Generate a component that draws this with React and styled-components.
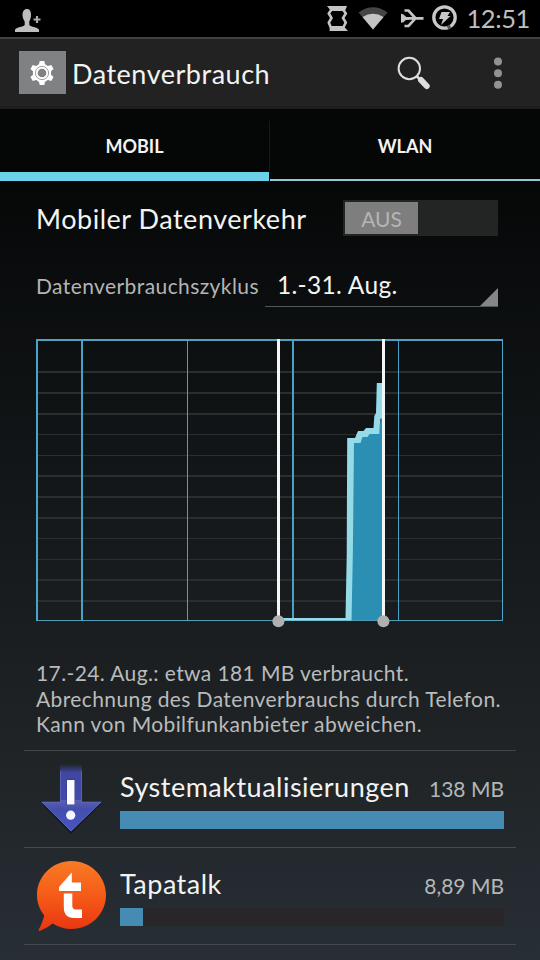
import React from "react";
import styled, { createGlobalStyle } from "styled-components";

const GlobalStyle = createGlobalStyle`
  * {
    box-sizing: border-box;
  }

  body {
    margin: 0;
    background: #000;
    font-family: Lato, "Open Sans", sans-serif;
  }
`;

const Screen = styled.div`
  width: 540px;
  height: 960px;
  overflow: hidden;
  display: flex;
  flex-direction: column;
  background: linear-gradient(#000 0, #050707 170px, #121517 450px, #1f2325 740px, #272e35 960px);
  color: #f3f3f3;
  white-space: nowrap;
`;

const StatusBar = styled.div`
  height: 37px;
  flex: none;
  display: flex;
  align-items: center;
  justify-content: space-between;
  padding: 0 10px 0 14px;
  background: #000;
`;

const StatusIcons = styled.div`
  display: flex;
  align-items: center;
`;

const Clock = styled.span`
  margin-left: 8px;
  font-size: 25.5px;
  line-height: 37px;
  letter-spacing: -0.4px;
  color: #bebebe;
`;

const ActionBar = styled.header`
  height: 72px;
  flex: none;
  display: flex;
  align-items: center;
  padding: 0 38px 0 19px;
  background: #222;
  border-top: 2px solid #414141;
  border-bottom: 3px solid #1d1d1d;
`;

const AppBadge = styled.div`
  width: 47px;
  height: 43px;
  display: flex;
  align-items: center;
  justify-content: center;
  padding-right: 1px;
  background: #7f8182;
`;

const Title = styled.h1`
  flex: 1;
  margin: 0 0 0 6px;
  padding-top: 2px;
  font-size: 27px;
  font-weight: 400;
  line-height: 36px;
  letter-spacing: 0.52px;
`;

const SearchIcon = styled.svg`
  margin: 1px 62px 0 0;
`;

const Tabs = styled.nav`
  height: 72px;
  flex: none;
  display: flex;
  background: #050706;
`;

const Tab = styled.div`
  width: ${({ $active }) => ($active ? "269px" : "270px")};
  display: flex;
  align-items: center;
  justify-content: center;
  padding-top: ${({ $active }) => ($active ? "11px" : "4px")};
  border-bottom: ${({ $active }) => ($active ? "9px solid #6dd0e9" : "2px solid #91c7d2")};
  font-size: 18px;
  font-weight: 700;
`;

const TabDivider = styled.div`
  width: 1px;
  height: 50px;
  margin-top: 12px;
  background: #191b1b;
`;

const Settings = styled.main`
  padding: 19px 36px 0;
`;

const SettingRow = styled.div`
  width: 462px;
  display: flex;
  align-items: center;
  justify-content: space-between;
`;

const SettingLabel = styled.span`
  padding-top: 2px;
  font-size: 27px;
  line-height: 34px;
  letter-spacing: 0.52px;
`;

const Switch = styled.div`
  width: 155px;
  height: 36px;
  padding: 2px;
  background: #232424;
`;

const SwitchThumb = styled.div`
  width: 73px;
  height: 32px;
  padding-top: 1px;
  background: #7e7e7e;
  color: #b5b5b5;
  font-size: 21px;
  line-height: 32px;
  text-align: center;
`;

const CycleRow = styled(SettingRow)`
  height: 42px;
  margin-top: 29px;
`;

const CycleLabel = styled.span`
  padding-bottom: 2px;
  font-size: 21px;
  letter-spacing: 0.41px;
  color: #b4b5b5;
`;

const Spinner = styled.div`
  width: 233px;
  height: 42px;
  display: flex;
  align-items: flex-end;
  justify-content: space-between;
  padding-left: 12px;
  border-bottom: 1px solid #555758;
  font-size: 24.5px;
  line-height: 42px;
  letter-spacing: 0.3px;
`;

const SpinnerArrow = styled.div`
  width: 18px;
  height: 18px;
  background: #858686;
  clip-path: polygon(100% 0, 100% 100%, 0 100%);
`;

const Chart = styled.svg`
  display: block;
  margin: 27px 0 0 -6px;
`;

const Summary = styled.p`
  margin: 26px 0 0;
  font-size: 21px;
  line-height: 25.5px;
  letter-spacing: 0.39px;
  color: #b9bbbc;
`;

const AppList = styled.ul`
  margin: 13px 24px 0;
  padding: 0;
  list-style: none;
  border-top: 1px solid #424547;
`;

const AppRow = styled.li`
  height: 97px;
  display: flex;
  padding: 0 12px;
  border-bottom: 1px solid #464a4d;
`;

const AppIcon = styled.svg`
  flex: none;
  margin-top: 8px;
`;

const AppInfo = styled.div`
  flex: 1;
  margin-left: 12px;
  padding-top: 18px;
`;

const AppHeading = styled.div`
  height: 36px;
  display: flex;
  align-items: baseline;
  justify-content: space-between;
  line-height: 36px;
`;

const AppName = styled.span`
  font-size: 27px;
  letter-spacing: 0.49px;
`;

const AppUsage = styled.span`
  font-size: 21px;
  color: #b4b7b9;
`;

const UsageTrack = styled.div`
  height: 18px;
  margin-top: 6px;
  background: #282629;
`;

const UsageBar = styled.div`
  height: 100%;
  background: #458bb4;
`;

// [y, thickness]
const gridLines = [
  [371, 2], [392, 2], [413, 2], [434, 1], [455, 1], [475, 2],
  [496, 2], [517, 2], [538, 1], [559, 1], [579, 2], [600, 2],
];

// [x, thickness]
const weekLines = [[81, 2], [187, 1], [292, 2], [398, 1]];

const sweeps = [277, 382];

const UsageChart = () => (
  <Chart width="480" height="300" viewBox="30 334 480 300">
    {gridLines.map(([y, h]) => (
      <rect key={y} x="38" y={y} width="464" height={h} fill="#2b2e2f" />
    ))}
    <path
      d="M351 620V440H361L363 434 369 433 371 430H379L381 418H382.5V620Z"
      fill="#2b8fb4"
    />
    <rect x="36" y="339" width="2" height="282" fill="#4aa3cb" />
    <rect x="36" y="339" width="467" height="2" fill="#549fbe" />
    <rect x="502" y="339" width="1" height="282" fill="#4ba6c9" />
    <rect x="36" y="620" width="467" height="1" fill="#4f9fb9" />
    {weekLines.map(([x, w]) => (
      <rect key={x} x={x} y="339" width={w} height="282" fill="#47a1c9" />
    ))}
    <path
      d="M280 618H345.5L346.7 556 347.2 438H355L358 431H363.5L366 428H373.5L374.3 416 376 413 376.8 383H382V418L380.3 419 379.3 434H369.5L367.5 437H362.5L360.5 443H354L352.8 556 351.5 620.5H280Z"
      fill="#94dbe7"
    />
    {sweeps.map((x) => (
      <g key={x}>
        <rect x={x} y="339" width="3" height="280" fill="#f4f6f6" />
        <circle cx={x + 1.4} cy="621.3" r="6" fill="#b0b0b0" />
      </g>
    ))}
  </Chart>
);

const UpdateIcon = () => (
  <AppIcon width="72" height="78" viewBox="36 759 72 78">
    <defs>
      <linearGradient id="shaft" x1="0" y1="0" x2="0" y2="1">
        <stop offset="0" stopColor="#3c449c" stopOpacity="0" />
        <stop offset="0.2" stopColor="#3f479f" />
        <stop offset="1" stopColor="#414bad" />
      </linearGradient>
      <linearGradient id="head" x1="0" y1="0" x2="0" y2="1">
        <stop offset="0" stopColor="#5b60b2" />
        <stop offset="0.3" stopColor="#444ead" />
        <stop offset="1" stopColor="#4656c6" />
      </linearGradient>
    </defs>
    <path d="M42 804L71 834 101 804Z" fill="#111417" opacity="0.8" />
    <path d="M60 764H82V806H60Z" fill="url(#shaft)" />
    <path d="M41.5 802H60.5V800H81.5V802H101.5L71 831.5Z" fill="url(#head)" />
    <path d="M60.5 771V802H42L71 831 101 802H81.5V771" fill="none" stroke="#7178c4" strokeWidth="0.8" opacity="0.65" />
    <rect x="66.5" y="779" width="8.5" height="26" fill="#353a93" />
    <rect x="67" y="780" width="7.5" height="24.5" fill="#fbfbff" />
    <circle cx="70.7" cy="815.2" r="4.6" fill="#f6f6ff" />
  </AppIcon>
);

const TapatalkIcon = () => (
  <AppIcon width="72" height="78" viewBox="36 856 72 78">
    <defs>
      <linearGradient id="bubble" x1="0" y1="0" x2="0" y2="1">
        <stop offset="0" stopColor="#f97a24" />
        <stop offset="0.5" stopColor="#f55b18" />
        <stop offset="1" stopColor="#e93512" />
      </linearGradient>
    </defs>
    <path
      d="M71.5 861C90.5 861 106 876 106 895S90.5 929 71.5 929C64.5 929 58 927 52.5 923.5C49 926.5 44 929.5 39.5 931C38.5 931 38.5 930 39 929C41.5 924.5 43 920 44.3 915.5C39.7 909.5 37 903 37 895C37 876 52.5 861 71.5 861Z"
      fill="url(#bubble)"
    />
    <path d="M71.8 872.5V882.5H81V891H59V887Z" fill="#fff" />
    <path d="M63.8 893.5H72.3V905.5Q72.3 909.5 76 909.5H82V918H74Q63.8 918 63.8 907Z" fill="#fff" />
  </AppIcon>
);

const apps = [
  { name: "Systemaktualisierungen", usage: "138 MB", share: 100, Icon: UpdateIcon },
  { name: "Tapatalk", usage: "8,89 MB", share: 6, Icon: TapatalkIcon },
];

const ContactIcon = () => (
  <svg width="27" height="26" viewBox="14 6 27 26">
    <path
      d="M27 9C30 9 31 11.5 31 15C31 18 30 20 29.3 21.5V25C31 27 37 27 39 29.5V32H15V29.5C17 27 23 27 24.7 25V21.5C23.5 19.5 22.5 17.5 22.5 15C22.5 11.5 24 9 27 9Z"
      fill="#bebebe"
    />
    <path d="M37 16V23M33.5 19.5H40.5" stroke="#aaa" strokeWidth="2.2" />
  </svg>
);

const StatusGlyphs = () => (
  <svg width="132" height="30" viewBox="326 4 132 30">
    {/* rotation */}
    <path d="M327 6H347L345 11H331Z" fill="#c4c4c4" />
    <path d="M330 26H343.5L348 31H329.5Z" fill="#c4c4c4" />
    <path
      d="M331.5 9.5L328.8 13.5L331.5 18L328.8 22.5L331 28M343 9.5L345.8 13.5L343 18L345.8 22.5L343 28"
      fill="none"
      stroke="#c4c4c4"
      strokeWidth="2.6"
    />
    {/* wifi */}
    <path d="M358.5 12.5Q373 2 387.5 12.5L373 29.5Z" fill="#454545" />
    <path d="M362.5 17Q373 10.5 383.5 17L373 29.5Z" fill="#c4c4c4" />
    {/* airplane */}
    <path
      d="M404.5 10.5H408.5L415.5 18.3L408.5 26H404.5M402 15L405.5 18.3L402 21.7M405 18.3H423.5"
      fill="none"
      stroke="#c4c4c4"
      strokeWidth="2.7"
    />
    <path d="M401 13.5L406 17H409V19.8H406L401 23Z" fill="#c4c4c4" />
    {/* battery */}
    <circle cx="444.5" cy="17.5" r="10.7" fill="none" stroke="#c8c8c8" strokeWidth="3.3" />
    <path d="M447.5 27.8L450.5 26.4" stroke="#555" strokeWidth="3.7" />
    <path d="M441.5 12H450L447.5 16H450.5L441 25L443 19H439Z" fill="#c8c8c8" />
  </svg>
);

const teeth = [0, 60, 120, 180, 240, 300];

const GearIcon = () => (
  <svg width="26" height="26" viewBox="-13 -13 26 26">
    {teeth.map((angle) => (
      <path key={angle} d="M-3.4 -7L-2.3 -12H2.3L3.4 -7Z" fill="#fff" transform={`rotate(${angle})`} />
    ))}
    <circle r="9.2" fill="#fff" />
    <circle r="6.6" fill="none" stroke="#858788" strokeWidth="0.8" />
    <circle r="4.3" fill="#7f8182" />
  </svg>
);

const App = () => (
  <>
    <GlobalStyle />
    <Screen>
      <StatusBar>
        <ContactIcon />
        <StatusIcons>
          <StatusGlyphs />
          <Clock>12:51</Clock>
        </StatusIcons>
      </StatusBar>

      <ActionBar>
        <AppBadge>
          <GearIcon />
        </AppBadge>
        <Title>Datenverbrauch</Title>
        <SearchIcon width="36" height="36" viewBox="396 55 36 36">
          <circle cx="409.3" cy="68.5" r="10.7" fill="none" stroke="#dedede" strokeWidth="2" />
          <path d="M416.5 76L420 79.5" stroke="#dedede" strokeWidth="2.5" />
          <path d="M421 80L426.7 86" stroke="#dedede" strokeWidth="6" strokeLinecap="round" />
        </SearchIcon>
        <svg width="8" height="34" viewBox="0 0 8 34">
          <circle cx="4" cy="5.5" r="4" fill="#929292" />
          <circle cx="4" cy="17.2" r="4" fill="#929292" />
          <circle cx="4" cy="28.7" r="4" fill="#929292" />
        </svg>
      </ActionBar>

      <Tabs>
        <Tab $active>MOBIL</Tab>
        <TabDivider />
        <Tab>WLAN</Tab>
      </Tabs>

      <Settings>
        <SettingRow>
          <SettingLabel>Mobiler Datenverkehr</SettingLabel>
          <Switch>
            <SwitchThumb>AUS</SwitchThumb>
          </Switch>
        </SettingRow>
        <CycleRow>
          <CycleLabel>Datenverbrauchszyklus</CycleLabel>
          <Spinner>
            1.-31. Aug.
            <SpinnerArrow />
          </Spinner>
        </CycleRow>
        <UsageChart />
        <Summary>
          17.-24. Aug.: etwa 181 MB verbraucht.
          <br />
          Abrechnung des Datenverbrauchs durch Telefon.
          <br />
          Kann von Mobilfunkanbieter abweichen.
        </Summary>
      </Settings>

      <AppList>
        {apps.map(({ name, usage, share, Icon }) => (
          <AppRow key={name}>
            <Icon />
            <AppInfo>
              <AppHeading>
                <AppName>{name}</AppName>
                <AppUsage>{usage}</AppUsage>
              </AppHeading>
              <UsageTrack>
                <UsageBar style={{ width: `${share}%` }} />
              </UsageTrack>
            </AppInfo>
          </AppRow>
        ))}
      </AppList>
    </Screen>
  </>
);

export default App;
